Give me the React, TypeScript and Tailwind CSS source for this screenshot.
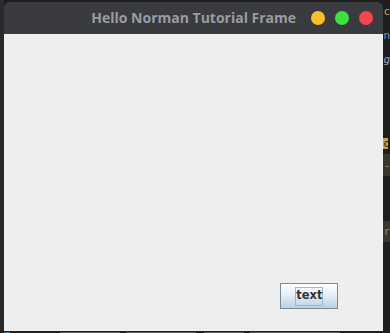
import React from "react";

const TitleButton = ({ colour }: { colour: string }) => (
  <span className={`block h-[14px] w-[14px] rounded-full ${colour}`} />
);

// tops of the editor letters peeking out under the window
const bottomMarks = [
  { w: "w-[6px]", c: "bg-[#4a6f99]" },
  { w: "w-[50px]", c: "bg-transparent" },
  { w: "w-[60px]", c: "bg-[#5a5a5a]" },
  { w: "w-[6px]", c: "bg-transparent" },
  { w: "w-[70px]", c: "bg-[#5a5a5a]" },
  { w: "w-[8px]", c: "bg-transparent" },
  { w: "w-[40px]", c: "bg-[#5a5a5a]" },
  { w: "w-[6px]", c: "bg-transparent" },
  { w: "w-[90px]", c: "bg-[#5a5a5a]" },
];

export default function App() {
  return (
    <div className="flex h-[333px] w-[390px] flex-col overflow-hidden bg-[#1e1e1e]">
      <div className="flex h-[331px]">
        <div className="w-[4px] bg-[#2a2a2a]" />

        <div className="mt-[2px] flex w-[380px] flex-col">
          <div className="grid h-[32px] grid-cols-[1fr_auto_1fr] items-center rounded-t-[6px] bg-[#3a3b3f]">
            <div />
            <span className="font-['Open_Sans',sans-serif] text-[14px] font-bold leading-none text-[#999da2]">
              Hello Norman Tutorial Frame
            </span>
            <div className="flex justify-end gap-[10px] pr-[10px]">
              <TitleButton colour="bg-[#f8c02e]" />
              <TitleButton colour="bg-[#3be13c]" />
              <TitleButton colour="bg-[#f2474f]" />
            </div>
          </div>

          <div className="flex flex-1 flex-col items-end justify-end bg-[#eeeeee] pb-[22px] pr-[45px]">
            <button className="flex h-[26px] w-[58px] items-center justify-center border border-[#7a8a99] bg-gradient-to-b from-[#ffffff] via-[#e3ecf5] to-[#b8cfe5]">
              <span className="flex h-[19px] items-center border border-[#a3b8cc] font-['DejaVu_Sans',sans-serif] text-[11.5px] font-bold leading-none text-[#333333]">
                text
              </span>
            </button>
          </div>
        </div>

        <div className="flex flex-1 flex-col font-['DejaVu_Sans_Mono',monospace] text-[11px] leading-none">
          <span className="mt-[6px] text-[#c9a24a]">c</span>
          <span className="mt-[13px] text-[#6a97c9]">n</span>
          <span className="mt-[13px] italic text-[#8fa2b8]">g</span>
          <span className="mt-[73px] w-[5px] bg-[#c9a24a] text-[#1e1e1e]">o</span>
          <div className="mt-[5px] flex h-[22px] items-center bg-[#37372b] text-[#8a8a7a]">-</div>
          <div className="mt-[45px] flex h-[21px] items-center bg-[#37372b] text-[#8a8a7a]">r</div>
        </div>
      </div>

      <div className="flex h-[2px] items-end pl-[4px]">
        {bottomMarks.map((m, i) => (
          <span key={i} className={`block h-[1px] ${m.w} ${m.c}`} />
        ))}
      </div>
    </div>
  );
}
